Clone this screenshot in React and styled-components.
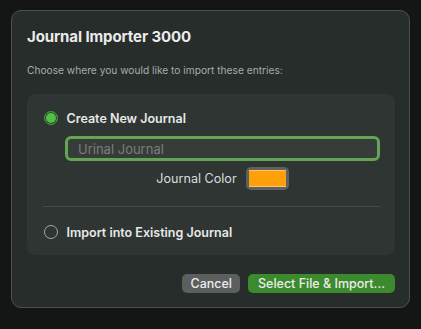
import React, { useState } from "react";
import styled, { createGlobalStyle } from "styled-components";

const GlobalStyle = createGlobalStyle`
  html, body {
    margin: 0;
    padding: 0;
    background: #141515;
  }
  body {
    font-family: Inter, "Noto Sans", "Liberation Sans", sans-serif;
    -webkit-font-smoothing: antialiased;
  }
`;

const Page = styled.div`
  width: 421px;
  height: 329px;
  padding: 10px 11px 0 11px;
  box-sizing: border-box;
`;

const Dialog = styled.div`
  width: 399px;
  height: 298px;
  box-sizing: border-box;
  background: #272d2b;
  border: 1px solid #4b504e;
  border-radius: 10px;
  padding: 17px 14px 0 15px;
  display: flex;
  flex-direction: column;
`;

const Title = styled.h1`
  margin: 0;
  font-size: 15px;
  line-height: 18px;
  font-weight: 700;
  color: #ebebeb;
  letter-spacing: -0.1px;
`;

const Subtitle = styled.p`
  margin: 17px 0 0 0;
  font-size: 10.2px;
  line-height: 14px;
  color: #a9abaa;
`;

const Panel = styled.div`
  margin-top: 17px;
  height: 161px;
  box-sizing: border-box;
  background: #2f3533;
  border-radius: 8px;
  padding: 15px 15px 0 16px;
  display: flex;
  flex-direction: column;
`;

const Option = styled.label`
  display: flex;
  align-items: center;
  gap: 9px;
  height: 18px;
  font-size: 12.5px;
  font-weight: 600;
  color: #e8e8e8;
  cursor: pointer;
`;

const Radio = styled.span`
  width: 14px;
  height: 14px;
  border-radius: 50%;
  box-sizing: border-box;
  margin-left: 0.5px;
  flex-shrink: 0;
  ${(p) =>
    p.$checked
      ? `
    background: #52c244;
    border: 1.5px solid #3f9a36;
    box-shadow: inset 0 0 0 1px #2f3533;
  `
      : `
    border: 1.2px solid #a4a6a5;
  `}
`;

const Indent = styled.div`
  margin-left: 22px;
  display: flex;
  flex-direction: column;
`;

const NameInput = styled.input`
  margin-top: 9px;
  height: 25px;
  box-sizing: border-box;
  border: 3px solid #63a552;
  border-radius: 6px;
  background: #373c3a;
  padding: 0 10px;
  font-family: inherit;
  font-size: 13px;
  color: #e8e8e8;
  outline: none;
  &::placeholder {
    color: #7a7d7c;
  }
`;

const ColorRow = styled.div`
  margin-top: 6px;
  display: flex;
  align-items: center;
  justify-content: center;
  gap: 9px;
  font-size: 12.6px;
  color: #dcdcdc;
`;

const Swatch = styled.span`
  width: 43px;
  height: 23px;
  box-sizing: border-box;
  border-radius: 5px;
  background: #5d615f;
  padding: 3px;
  display: flex;
  span {
    flex: 1;
    background: #ff9f0a;
    border-top: 1px solid #ffc46a;
    border-bottom: 1px solid #ffc46a;
  }
`;

const Divider = styled.hr`
  margin: 16px 0 16px 0;
  border: none;
  height: 1px;
  background: #454b49;
`;

const Footer = styled.div`
  margin-top: 19px;
  display: flex;
  justify-content: flex-end;
  gap: 8px;
`;

const Button = styled.button`
  height: 19px;
  box-sizing: border-box;
  border: none;
  border-radius: 5px;
  padding: 0 ${(p) => (p.$primary ? "10px" : "8px")};
  font-family: inherit;
  font-size: 12.5px;
  font-weight: 500;
  color: #ececec;
  background: ${(p) => (p.$primary ? "#3b8b2e" : "#5b5f5d")};
  cursor: pointer;
`;

export default function App() {
  const [mode, setMode] = useState("new");
  return (
    <Page>
      <GlobalStyle />
      <Dialog>
        <Title>Journal Importer 3000</Title>
        <Subtitle>Choose where you would like to import these entries:</Subtitle>
        <Panel>
          <Option onClick={() => setMode("new")}>
            <Radio $checked={mode === "new"} />
            Create New Journal
          </Option>
          <Indent>
            <NameInput placeholder="Urinal Journal" />
            <ColorRow>
              Journal Color
              <Swatch>
                <span />
              </Swatch>
            </ColorRow>
          </Indent>
          <Divider />
          <Option onClick={() => setMode("existing")}>
            <Radio $checked={mode === "existing"} />
            Import into Existing Journal
          </Option>
        </Panel>
        <Footer>
          <Button>Cancel</Button>
          <Button $primary>Select File &amp; Import...</Button>
        </Footer>
      </Dialog>
    </Page>
  );
}
